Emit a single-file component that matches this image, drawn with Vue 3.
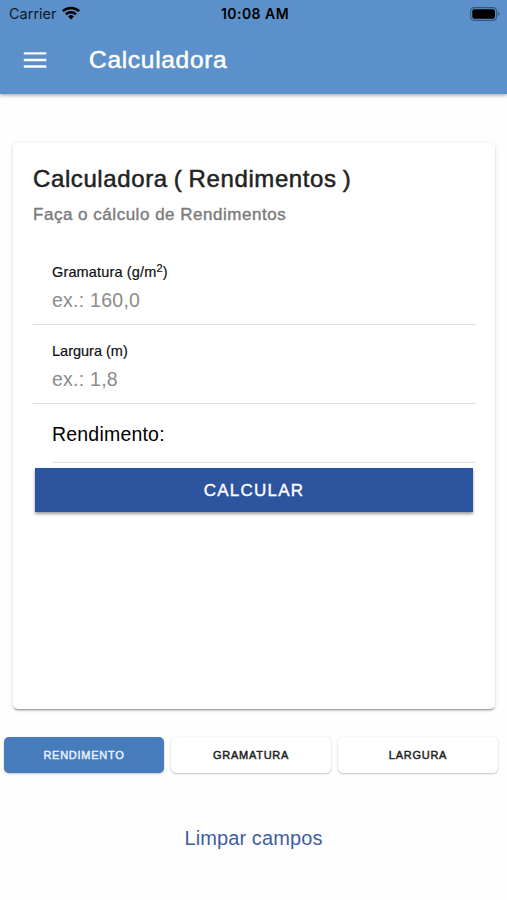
<template>
  <div class="page">
    <header class="header">
      <div class="status-bar">
        <div class="carrier">
          <span>Carrier</span>
          <svg class="wifi" viewBox="0 0 18 14" width="18" height="14">
            <g fill="none" stroke="#000" stroke-width="2.5">
              <path d="M0.9 5.2a11.6 11.6 0 0 1 16.2 0" />
              <path d="M3.9 8.4a7.3 7.3 0 0 1 10.2 0" />
            </g>
            <path d="M9 13.4L6.1 10.4a4.1 4.1 0 0 1 5.8 0z" fill="#000" />
          </svg>
        </div>
        <span class="time">10:08 AM</span>
        <svg class="battery" viewBox="0 0 31 14" width="31" height="14">
          <rect x="0.6" y="0.6" width="26" height="12.8" rx="3.6" fill="none" stroke="#000" stroke-opacity="0.4" stroke-width="1.1" />
          <rect x="2.3" y="2.3" width="22.7" height="9.4" rx="2" fill="#000" />
          <path d="M28.2 4.9c1.9 0.7 1.9 3.5 0 4.2z" fill="#000" fill-opacity="0.4" />
        </svg>
      </div>
      <div class="toolbar">
        <button class="menu-button" aria-label="Menu">
          <svg viewBox="0 0 24 16" width="24" height="16">
            <path d="M0.8 1.4h22.5M0.8 8h22.5M0.8 14.5h22.5" stroke="#fff" stroke-width="2.3" />
          </svg>
        </button>
        <h1 class="toolbar-title">Calculadora</h1>
      </div>
    </header>

    <main class="content">
      <section class="card">
        <h2 class="card-title">Calculadora ( Rendimentos )</h2>
        <p class="card-subtitle">Faça o cálculo de Rendimentos</p>

        <label class="item">
          <span class="item-label gram-label">Gramatura (g/m<sup>2</sup>)</span>
          <input v-model="gramatura" class="item-input" placeholder="ex.: 160,0">
        </label>
        <label class="item">
          <span class="item-label">Largura (m)</span>
          <input v-model="largura" class="item-input" placeholder="ex.: 1,8">
        </label>
        <div class="result">Rendimento: {{ rendimento }}</div>

        <button class="calc-button" @click="calcular">CALCULAR</button>
      </section>

      <nav class="tabs">
        <button
          v-for="tab in tabs"
          :key="tab"
          class="tab"
          :class="{ active: tab === activeTab }"
          @click="activeTab = tab"
        >
          {{ tab }}
        </button>
      </nav>

      <button class="clear-button" @click="limpar">Limpar campos</button>
    </main>
  </div>
</template>

<script setup>
import { ref } from 'vue'

const tabs = ['RENDIMENTO', 'GRAMATURA', 'LARGURA']
const activeTab = ref('RENDIMENTO')

const gramatura = ref('')
const largura = ref('')
const rendimento = ref('')

const toNumber = (value) => parseFloat(value.replace(',', '.'))

function calcular() {
  const result = 1000 / (toNumber(gramatura.value) * toNumber(largura.value))
  rendimento.value = Number.isFinite(result) ? result.toFixed(2).replace('.', ',') : ''
}

function limpar() {
  gramatura.value = ''
  largura.value = ''
  rendimento.value = ''
}
</script>

<style>
body {
  margin: 0;
  background: #fefefe;
}
</style>

<style scoped>
.page {
  height: 900px;
  overflow: hidden;
  font-family: 'Liberation Sans', Arial, sans-serif;
  color: #000;
}

button {
  border: 0;
  margin: 0;
  padding: 0;
  background: none;
  font-family: inherit;
}

.header {
  height: 94px;
  background: #5b90ca;
  box-shadow: 0 1px 4px rgba(0, 0, 0, 0.4);
}

.status-bar {
  display: grid;
  grid-template-columns: 1fr auto 1fr;
  align-items: center;
  height: 27px;
  padding: 0 6px 0 9px;
  font-family: Inter, sans-serif;
  font-size: 14.5px;
}

.carrier {
  display: flex;
  align-items: center;
  gap: 6px;
  color: #0c1a2a;
}

.wifi {
  margin: -2px 0 0 -1px;
}

.time {
  font-size: 14px;
  font-weight: 600;
  letter-spacing: 0.45px;
}

.battery {
  justify-self: end;
}

.toolbar {
  display: flex;
  align-items: center;
  height: 66px;
  padding-left: 23px;
}

.menu-button {
  display: flex;
  width: 66px;
}

.toolbar-title {
  margin: 0;
  font-size: 24.5px;
  font-weight: 400;
  letter-spacing: 0.7px;
  color: #fff;
  -webkit-text-stroke: 0.5px #fff;
}

.content {
  display: flex;
  flex-direction: column;
  padding-top: 49px;
}

.card {
  box-sizing: border-box;
  display: flex;
  flex-direction: column;
  height: 566px;
  margin: 0 12px 0 13px;
  padding: 20px 19px 0 20px;
  border-radius: 5px;
  background: #fff;
  box-shadow: 0 2px 2px -1px rgba(0, 0, 0, 0.4), 0 1px 4px rgba(0, 0, 0, 0.15);
}

.card-title {
  margin: 0;
  font-size: 24px;
  font-weight: 400;
  line-height: 32px;
  letter-spacing: 0.6px;
  word-spacing: -1.1px;
  color: #222;
  -webkit-text-stroke: 0.5px #222;
}

.card-subtitle {
  margin: 9px 0 19px;
  font-size: 17px;
  line-height: 22px;
  letter-spacing: 0.52px;
  color: #7b7b7b;
  -webkit-text-stroke: 0.4px #7b7b7b;
}

.item {
  box-sizing: border-box;
  display: flex;
  flex-direction: column;
  height: 79.5px;
  padding: 17.5px 0 0 19px;
  border-bottom: 1px solid #e0e0e0;
}

.item-label {
  height: 18px;
  font-size: 14.5px;
  line-height: 18px;
  color: #111;
  -webkit-text-stroke: 0.2px #111;
}

.gram-label {
  letter-spacing: 0.15px;
}

.item-label sup {
  font-size: 11px;
  line-height: 0;
  vertical-align: 5px;
}

.item-input {
  height: 24px;
  margin-top: 7.5px;
  padding: 0;
  border: 0;
  outline: 0;
  background: none;
  font-family: inherit;
  font-size: 19.5px;
  letter-spacing: 0.25px;
}

.item-input::placeholder {
  color: #8b8b8b;
}

.result {
  box-sizing: border-box;
  height: 58.5px;
  margin-left: 19px;
  border-bottom: 1px solid #e0e0e0;
  font-size: 19.5px;
  line-height: 61px;
  letter-spacing: 0.2px;
}

.calc-button {
  height: 44px;
  margin: 5px 3px 0 2px;
  padding-top: 2px;
  background: #2c549f;
  box-shadow: 0 2px 3px rgba(0, 0, 0, 0.4);
  font-size: 17px;
  letter-spacing: 1.25px;
  color: #fff;
  -webkit-text-stroke: 0.4px #fff;
}

.tabs {
  display: grid;
  grid-template-columns: repeat(3, 1fr);
  gap: 7px;
  margin: 28px 9px 0 4px;
}

.tab {
  height: 36px;
  border-radius: 5px;
  background: #fff;
  box-shadow: 0 1px 2px rgba(0, 0, 0, 0.22), 0 0 1px rgba(0, 0, 0, 0.15);
  font-size: 11px;
  letter-spacing: 0.75px;
  color: #1c1c1c;
  -webkit-text-stroke: 0.45px currentColor;
}

.tab.active {
  background: #467bbc;
  color: #eaf2fc;
}

.clear-button {
  align-self: center;
  margin-top: 53px;
  font-size: 20px;
  line-height: 24px;
  letter-spacing: 0.1px;
  color: #3f5da3;
}
</style>
